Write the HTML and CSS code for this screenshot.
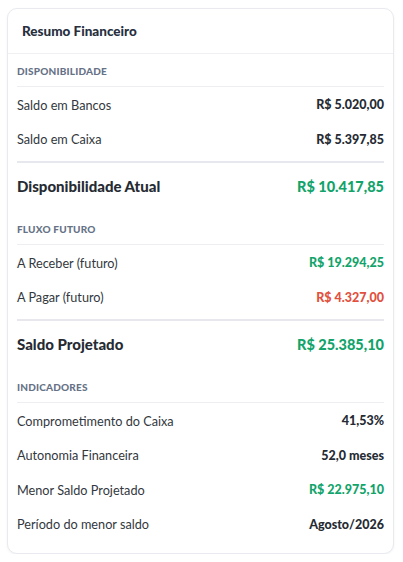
FILE: index.html
```html
<!DOCTYPE html>
<html lang="pt-BR">
  <head>
    <meta charset="UTF-8" />
    <meta name="viewport" content="width=device-width, initial-scale=1.0" />
    <title>Resumo Financeiro</title>
    <link rel="stylesheet" href="styles.css">
  </head>
  <body>
    <div class="card">
      <div class="card-header">Resumo Financeiro</div>
      <div class="card-body">

        <div class="section">
          <div class="section-title">Disponibilidade</div>
          <div class="row">
            <span class="label">Saldo em Bancos</span>
            <span class="value">R$ 5.020,00</span>
          </div>
          <div class="row">
            <span class="label">Saldo em Caixa</span>
            <span class="value">R$ 5.397,85</span>
          </div>
          <div class="divider"></div>
          <div class="row total">
            <span class="label">Disponibilidade Atual</span>
            <span class="value positive">R$ 10.417,85</span>
          </div>
        </div>

        <div class="section">
          <div class="section-title">Fluxo Futuro</div>
          <div class="row">
            <span class="label">A Receber (futuro)</span>
            <span class="value positive">R$ 19.294,25</span>
          </div>
          <div class="row">
            <span class="label">A Pagar (futuro)</span>
            <span class="value negative">R$ 4.327,00</span>
          </div>
          <div class="divider"></div>
          <div class="row total">
            <span class="label">Saldo Projetado</span>
            <span class="value positive">R$ 25.385,10</span>
          </div>
        </div>

        <div class="section">
          <div class="section-title">Indicadores</div>
          <div class="row">
            <span class="label">Comprometimento do Caixa</span>
            <span class="value">41,53%</span>
          </div>
          <div class="row">
            <span class="label">Autonomia Financeira</span>
            <span class="value">52,0 meses</span>
          </div>
          <div class="row">
            <span class="label">Menor Saldo Projetado</span>
            <span class="value positive">R$ 22.975,10</span>
          </div>
          <div class="row">
            <span class="label">Período do menor saldo</span>
            <span class="value">Agosto/2026</span>
          </div>
        </div>

      </div>
    </div>
  </body>
</html>
```

FILE: styles.css
```css
body {
  margin: 0;
  padding: 8px 9px 0 7px;
  font-family: Lato, "Noto Sans", sans-serif;
  background-color: #fff;
  color: #2f3640;
}
.card {
  border: 1px solid #e8eaef;
  border-radius: 10px;
  box-shadow: 0 1px 3px rgba(0, 0, 0, 0.05);
  background: #fff;
}
.card-header {
  height: 44px;
  display: flex;
  align-items: center;
  padding: 0 14px;
  border-bottom: 1px solid #eef0f3;
  font-size: 13.5px;
  font-weight: 900;
  color: #273040;
}
.card-body {
  padding: 0 9px 12px;
}
.section + .section {
  margin-top: 5px;
}
.section-title {
  font-size: 10px;
  line-height: 12px;
  font-weight: 900;
  letter-spacing: 0.2px;
  text-transform: uppercase;
  color: #667286;
  padding: 11px 0 9px;
  border-bottom: 1px solid #eceef2;
}
.row {
  height: 33.5px;
  padding-top: 1px;
  display: flex;
  align-items: center;
  justify-content: space-between;
  font-size: 12.7px;
}
.label {
  color: #333840;
}
.value {
  font-weight: 900;
  font-size: 12.5px;
  color: #262b33;
}
.divider {
  height: 2px;
  margin-top: 5px;
  background: #e6e8ed;
}
.row.total {
  height: 42px;
  padding-top: 2px;
  font-size: 15px;
}
.row.total .label {
  font-weight: 900;
  color: #262b33;
}
.row.total .value {
  font-size: 14.5px;
}
.positive {
  color: #12a36a;
}
.row.total .value.positive {
  color: #12a36a;
}
.negative {
  color: #e2503e;
}
```
